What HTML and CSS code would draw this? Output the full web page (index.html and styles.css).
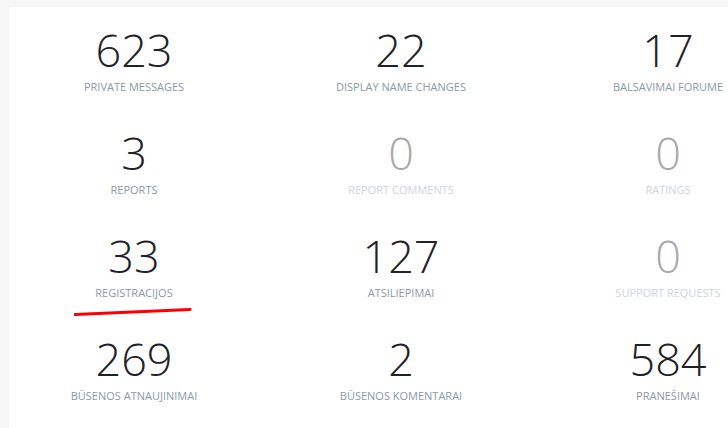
FILE: index.html
```html
<!DOCTYPE html>
<html lang="en">
<head>
    <meta charset="UTF-8">
    <title>Statistics</title>
    <link rel="stylesheet" href="styles.css">
</head>
<body>
    <div class="panel">
        <div class="stats">
            <div class="stat">
                <div class="count">623</div>
                <div class="label">Private Messages</div>
            </div>
            <div class="stat">
                <div class="count">22</div>
                <div class="label">Display Name Changes</div>
            </div>
            <div class="stat">
                <div class="count">17</div>
                <div class="label">Balsavimai Forume</div>
            </div>

            <div class="stat">
                <div class="count">3</div>
                <div class="label">Reports</div>
            </div>
            <div class="stat empty">
                <div class="count">0</div>
                <div class="label">Report Comments</div>
            </div>
            <div class="stat empty">
                <div class="count">0</div>
                <div class="label">Ratings</div>
            </div>

            <div class="stat marked">
                <div class="count">33</div>
                <div class="label">Registracijos</div>
                <svg class="underline" width="120" height="10" viewBox="0 0 120 10">
                    <path d="M1 7.5 L116 2.5" stroke="#ff0000" stroke-width="3" stroke-linecap="round" fill="none"/>
                </svg>
            </div>
            <div class="stat">
                <div class="count">127</div>
                <div class="label">Atsiliepimai</div>
            </div>
            <div class="stat empty">
                <div class="count">0</div>
                <div class="label">Support Requests</div>
            </div>

            <div class="stat">
                <div class="count">269</div>
                <div class="label">Būsenos atnaujinimai</div>
            </div>
            <div class="stat">
                <div class="count">2</div>
                <div class="label">Būsenos komentarai</div>
            </div>
            <div class="stat">
                <div class="count">584</div>
                <div class="label">Pranešimai</div>
            </div>
        </div>
    </div>
</body>
</html>
```

FILE: styles.css
```css
body {
    margin: 0;
    background-color: #f6f6f6;
    font-family: 'Open Sans', 'Liberation Sans', sans-serif;
    overflow: hidden;
}

.panel {
    margin: 7px 0 0 9px;
    background-color: #fff;
    height: 440px;
    overflow: hidden;
}

.stats {
    display: grid;
    grid-template-columns: repeat(3, 250px);
    column-gap: 17px;
    padding-top: 17px;
}

.stat {
    position: relative;
    display: flex;
    flex-direction: column;
    align-items: center;
    height: 103px;
}

.count {
    font-size: 45px;
    font-weight: 300;
    line-height: 52px;
    color: #1f2329;
}

.label {
    margin-top: 3px;
    font-size: 11px;
    line-height: 16px;
    text-transform: uppercase;
    color: #8c98a8;
}

.stat.empty .count {
    color: #a9a9a9;
}

.stat.empty .label {
    color: #cfd4db;
}

.underline {
    position: absolute;
    left: 65px;
    top: 77px;
}
```
